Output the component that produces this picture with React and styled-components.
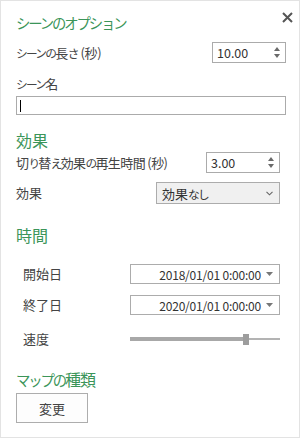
import React from "react";
import styled, { createGlobalStyle } from "styled-components";

const Global = createGlobalStyle`
  html, body { margin: 0; padding: 0; background: #ffffff; }
  * { box-sizing: border-box; }
`;

const FONT = `"Noto Sans CJK JP", "Noto Sans", sans-serif`;
const GREEN = "#3b9559";
const TEXT = "#444444";

const Panel = styled.div`
  width: 300px;
  height: 438px;
  border: 1px solid #e3e3e3;
  background: #fff;
  padding: 0 13px 0 15px;
  display: flex;
  flex-direction: column;
  font-family: ${FONT};
  color: ${TEXT};
`;

/* Kana in the original UI font are proportional and narrower than kanji */
const Kana = styled.span`
  font-size: 0.9em;
  letter-spacing: -0.15em;
`;

const J = ({ children }) => {
  const parts = String(children).split(/([\u3040-\u30ff]+)/);
  return parts.map((p, i) =>
    /^[\u3040-\u30ff]+$/.test(p) ? <Kana key={i}>{p}</Kana> : p ? <React.Fragment key={i}>{p}</React.Fragment> : null
  );
};

const Header = styled.div`
  height: 41px;
  display: flex;
  justify-content: space-between;
  align-items: center;
  margin-right: -9px;
`;

const Title = styled.div`
  font-size: 16px;
  line-height: 20px;
  color: ${GREEN};
  margin-top: 1px;
`;

const Close = styled.button`
  align-self: flex-start;
  margin-top: 8px;
  width: 16px;
  height: 16px;
  padding: 0;
  border: 0;
  background: transparent;
  display: flex;
  align-items: center;
  justify-content: center;
`;

const Heading = styled.div`
  font-size: 16px;
  line-height: 20px;
  height: 20px;
  color: ${GREEN};
  margin-top: ${(p) => p.$mt}px;
  letter-spacing: ${(p) => p.$ls || 0}px;
`;

const Row = styled.div`
  display: flex;
  align-items: center;
  justify-content: space-between;
  height: ${(p) => p.$h}px;
  margin-top: ${(p) => p.$mt || 0}px;
  margin-right: ${(p) => p.$mr || 0}px;
`;

const Label = styled.span`
  font-size: 13px;
  line-height: 18px;
  padding-left: ${(p) => p.$indent || 0}px;
  color: ${TEXT};
  white-space: nowrap;
  letter-spacing: ${(p) => p.$ls || 0}px;
`;

const LabelLine = styled.div`
  font-size: 13px;
  line-height: 20px;
  height: 20px;
  margin-top: ${(p) => p.$mt}px;
`;

const Spinner = styled.div`
  width: ${(p) => p.$w}px;
  height: 21px;
  border: 1px solid #ababab;
  display: flex;
  align-items: center;
  justify-content: space-between;
  padding: 0 5px 0 4px;
  font-size: 12.5px;
  color: #333;
`;

const Arrows = styled.div`
  display: flex;
  flex-direction: column;
  gap: 3px;
`;

const TextBox = styled.div`
  height: 19px;
  margin-top: 2px;
  border: 1px solid #ababab;
  display: flex;
  align-items: center;
  padding-left: 3px;
`;

const Caret = styled.span`
  width: 1px;
  height: 12px;
  background: #000;
`;

const Dropdown = styled.div`
  width: ${(p) => p.$w}px;
  height: ${(p) => p.$h}px;
  border: 1px solid #acacac;
  background: ${(p) => (p.$gray ? "#f0f0f0" : "#ffffff")};
  display: flex;
  align-items: center;
  justify-content: ${(p) => (p.$right ? "flex-end" : "space-between")};
  gap: 5px;
  padding: 0 6px 0 5px;
  font-size: ${(p) => (p.$right ? 12 : 13)}px;
  letter-spacing: ${(p) => (p.$right ? -0.2 : 0)}px;
  color: #333;
  white-space: nowrap;
`;

const SliderTrack = styled.div`
  width: 150px;
  height: 12px;
  display: flex;
  align-items: center;
`;

const TrackFill = styled.div`
  height: 4px;
  background: #a8a8a8;
`;

const Thumb = styled.div`
  width: 6px;
  height: 11px;
  background: #9d9d9d;
`;

const TrackRest = styled.div`
  flex: 1;
  height: 2px;
  background: #b3b3b3;
`;

const Button = styled.button`
  align-self: flex-start;
  width: 72px;
  height: 30px;
  margin-top: 4px;
  border: 1px solid #adadad;
  background: #fdfdfd;
  font-family: ${FONT};
  font-size: 13px;
  color: ${TEXT};
  padding: 0;
`;

const SpinArrows = () => (
  <Arrows>
    <svg width="6" height="4" viewBox="0 0 6 4">
      <path d="M0 4 L3 0 L6 4 Z" fill="#6a6a6a" />
    </svg>
    <svg width="6" height="4" viewBox="0 0 6 4">
      <path d="M0 0 L3 4 L6 0 Z" fill="#6a6a6a" />
    </svg>
  </Arrows>
);

const Chevron = () => (
  <svg width="7" height="5" viewBox="0 0 7 5">
    <path d="M0.5 0.8 L3.5 3.8 L6.5 0.8" fill="none" stroke="#666" strokeWidth="1.1" />
  </svg>
);

const DownTri = () => (
  <svg width="7" height="4" viewBox="0 0 7 4">
    <path d="M0 0 L3.5 4 L7 0 Z" fill="#777" />
  </svg>
);

export default function App() {
  const speed = 0.75;
  return (
    <>
      <Global />
      <Panel>
        <Header>
          <Title><J>シーンのオプション</J></Title>
          <Close aria-label="閉じる">
            <svg width="11" height="11" viewBox="0 0 11 11">
              <path d="M1 1 L10 10 M10 1 L1 10" stroke="#555" strokeWidth="2" />
            </svg>
          </Close>
        </Header>
        <Row $h={21}>
          <Label $ls={-0.3}><J>シーンの長さ (秒)</J></Label>
          <Spinner $w={74}>
            <span>10.00</span>
            <SpinArrows />
          </Spinner>
        </Row>
        <LabelLine $mt={11}><J>シーン名</J></LabelLine>
        <TextBox>
          <Caret />
        </TextBox>

        <Heading $mt={15}>効果</Heading>
        <Row $h={21} $mt={2} $mr={6}>
          <Label $ls={-0.6}><J>切り替え効果の再生時間 (秒)</J></Label>
          <Spinner $w={74}>
            <span>3.00</span>
            <SpinArrows />
          </Spinner>
        </Row>
        <Row $h={22} $mt={9} $mr={6}>
          <Label>効果</Label>
          <Dropdown $w={124} $h={22} $gray>
            <span><J>効果なし</J></span>
            <Chevron />
          </Dropdown>
        </Row>

        <Heading $mt={21}>時間</Heading>
        <Row $h={20} $mt={19} $mr={6}>
          <Label $indent={7}>開始日</Label>
          <Dropdown $w={150} $h={20} $right>
            <span>2018/01/01 0:00:00</span>
            <DownTri />
          </Dropdown>
        </Row>
        <Row $h={20} $mt={11} $mr={6}>
          <Label $indent={7}>終了日</Label>
          <Dropdown $w={150} $h={20} $right>
            <span>2020/01/01 0:00:00</span>
            <DownTri />
          </Dropdown>
        </Row>
        <Row $h={20} $mt={14} $mr={6}>
          <Label $indent={7}>速度</Label>
          <SliderTrack>
            <TrackFill style={{ width: `${Math.round(speed * 150)}px` }} />
            <Thumb />
            <TrackRest />
          </SliderTrack>
        </Row>

        <Heading $mt={20} $ls={-1}><J>マップの種類</J></Heading>
        <Button>変更</Button>
      </Panel>
    </>
  );
}
